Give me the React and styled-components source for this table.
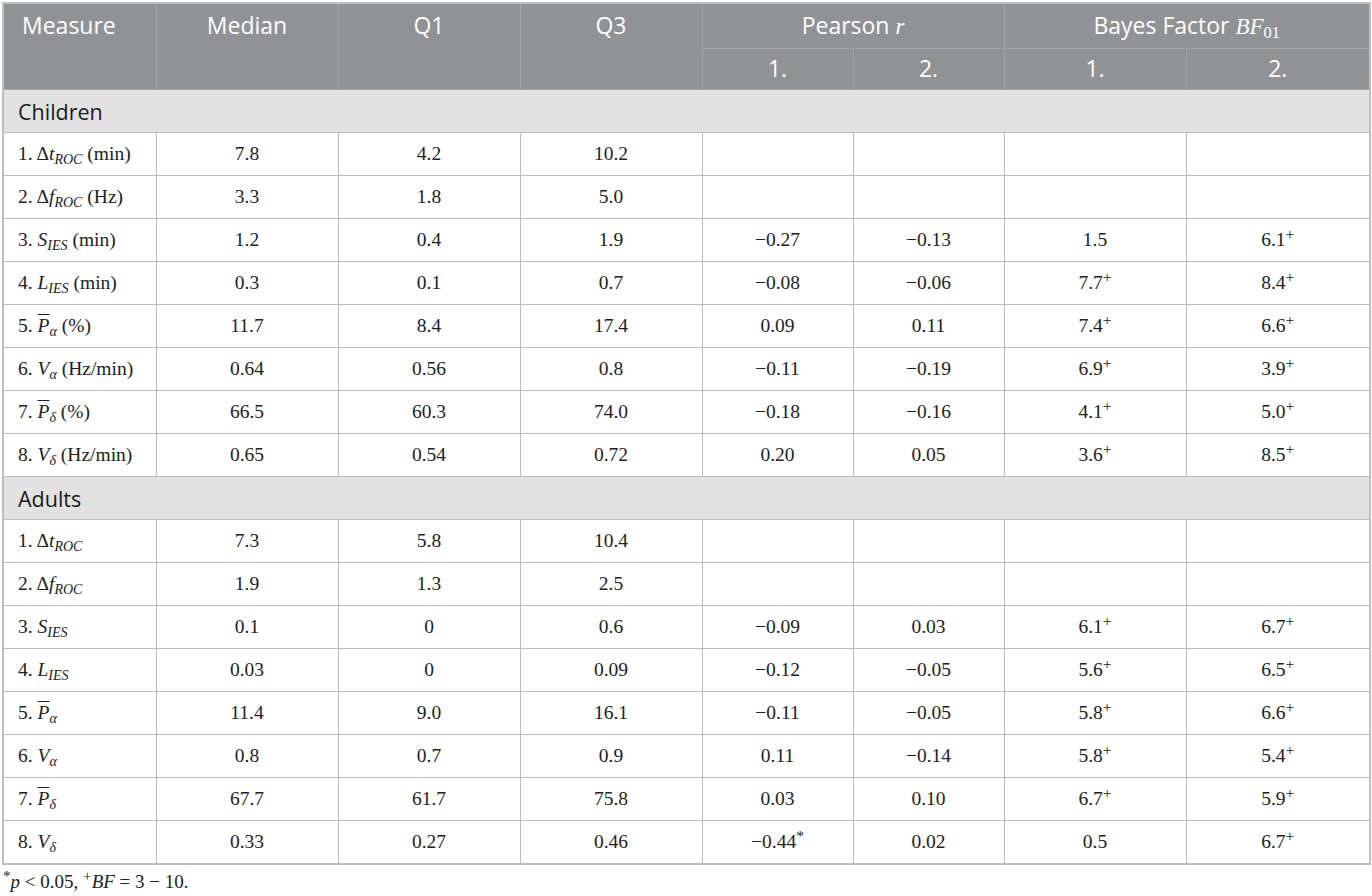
import styled, { createGlobalStyle } from "styled-components";

const GlobalStyle = createGlobalStyle`
  body {
    margin: 0;
    background: #ffffff;
  }
`;

const Page = styled.div`
  padding: 2px 3px 0 2px;
`;

const Table = styled.table`
  width: 1367px;
  border-collapse: collapse;
  table-layout: fixed;
  border: 2px solid #bcc0c0;
`;

const HeadCell = styled.th`
  background: #8f9396;
  color: #ffffff;
  font-family: "Open Sans", "Liberation Sans", sans-serif;
  font-weight: 400;
  font-size: 23px;
  height: ${(p) => p.$h || 41}px;
  padding: 0 ${(p) => (p.$left ? 18 : 14)}px;
  text-align: ${(p) => (p.$left ? "left" : "center")};
  vertical-align: top;
  line-height: ${(p) => p.$lh || 43}px;
  border: 1px solid #a3a6a8;
  box-sizing: border-box;
  white-space: nowrap;
`;

const GroupCell = styled.td`
  background: #e1e2e1;
  color: #1a1a1a;
  font-family: "Open Sans", "Liberation Sans", sans-serif;
  font-size: 21.5px;
  height: 42px;
  padding: 0 14px;
  border: 1px solid #b8bcbc;
`;

const Cell = styled.td`
  font-family: "Liberation Serif", "DejaVu Serif", serif;
  font-size: 19.5px;
  color: #222;
  height: 42px;
  padding: 0 14px;
  text-align: ${(p) => (p.$left ? "left" : "center")};
  border: 1px solid #b8bcbc;
  white-space: nowrap;
`;

const Ital = styled.i`
  font-family: "Liberation Serif", serif;
`;

const Sub = styled.sub`
  font-size: 0.72em;
  vertical-align: -0.25em;
  line-height: 0;
`;

const Sup = styled.sup`
  font-size: 0.8em;
  vertical-align: 0.45em;
  line-height: 0;
`;

const Bar = styled.span`
  font-style: italic;
  text-decoration: overline;
  text-decoration-thickness: 1px;
`;

const Footnote = styled.div`
  font-family: "Liberation Serif", serif;
  font-size: 19px;
  color: #222;
  padding: 6px 0 0 1px;
`;

const Delta = ({ v }) => (
  <>
    Δ<Ital>{v}</Ital>
    <Sub>
      <Ital>ROC</Ital>
    </Sub>
  </>
);

const Ies = ({ v }) => (
  <>
    <Ital>{v}</Ital>
    <Sub>
      <Ital>IES</Ital>
    </Sub>
  </>
);

const Greek = ({ v, g, bar }) => (
  <>
    {bar ? <Bar>{v}</Bar> : <Ital>{v}</Ital>}
    <Sub>
      <Ital>{g}</Ital>
    </Sub>
  </>
);

const plus = (v) => (
  <>
    {v}
    <Sup>+</Sup>
  </>
);

const labels = (units) => [
  <>1. <Delta v="t" />{units ? " (min)" : ""}</>,
  <>2. <Delta v="f" />{units ? " (Hz)" : ""}</>,
  <>3. <Ies v="S" />{units ? " (min)" : ""}</>,
  <>4. <Ies v="L" />{units ? " (min)" : ""}</>,
  <>5. <Greek v="P" g="α" bar />{units ? " (%)" : ""}</>,
  <>6. <Greek v="V" g="α" />{units ? " (Hz/min)" : ""}</>,
  <>7. <Greek v="P" g="δ" bar />{units ? " (%)" : ""}</>,
  <>8. <Greek v="V" g="δ" />{units ? " (Hz/min)" : ""}</>,
];

const children = [
  ["7.8", "4.2", "10.2", "", "", "", ""],
  ["3.3", "1.8", "5.0", "", "", "", ""],
  ["1.2", "0.4", "1.9", "−0.27", "−0.13", "1.5", plus("6.1")],
  ["0.3", "0.1", "0.7", "−0.08", "−0.06", plus("7.7"), plus("8.4")],
  ["11.7", "8.4", "17.4", "0.09", "0.11", plus("7.4"), plus("6.6")],
  ["0.64", "0.56", "0.8", "−0.11", "−0.19", plus("6.9"), plus("3.9")],
  ["66.5", "60.3", "74.0", "−0.18", "−0.16", plus("4.1"), plus("5.0")],
  ["0.65", "0.54", "0.72", "0.20", "0.05", plus("3.6"), plus("8.5")],
];

const adults = [
  ["7.3", "5.8", "10.4", "", "", "", ""],
  ["1.9", "1.3", "2.5", "", "", "", ""],
  ["0.1", "0", "0.6", "−0.09", "0.03", plus("6.1"), plus("6.7")],
  ["0.03", "0", "0.09", "−0.12", "−0.05", plus("5.6"), plus("6.5")],
  ["11.4", "9.0", "16.1", "−0.11", "−0.05", plus("5.8"), plus("6.6")],
  ["0.8", "0.7", "0.9", "0.11", "−0.14", plus("5.8"), plus("5.4")],
  ["67.7", "61.7", "75.8", "0.03", "0.10", plus("6.7"), plus("5.9")],
  [
    "0.33",
    "0.27",
    "0.46",
    <>
      −0.44<Sup>*</Sup>
    </>,
    "0.02",
    "0.5",
    plus("6.7"),
  ],
];

const widths = [153, 182, 182, 182, 151, 151, 182, 184];

const Group = ({ title, rows, units }) => {
  const names = labels(units);
  return (
    <>
      <tr>
        <GroupCell colSpan={8}>{title}</GroupCell>
      </tr>
      {rows.map((r, i) => (
        <tr key={i}>
          <Cell $left>{names[i]}</Cell>
          {r.map((v, j) => (
            <Cell key={j}>{v}</Cell>
          ))}
        </tr>
      ))}
    </>
  );
};

const App = () => {
  return (
    <Page>
      <GlobalStyle />
      <Table>
        <colgroup>
          {widths.map((w, i) => (
            <col key={i} style={{ width: w }} />
          ))}
        </colgroup>
        <thead>
          <tr>
            <HeadCell $left rowSpan={2}>Measure</HeadCell>
            <HeadCell rowSpan={2}>Median</HeadCell>
            <HeadCell rowSpan={2}>Q1</HeadCell>
            <HeadCell rowSpan={2}>Q3</HeadCell>
            <HeadCell colSpan={2} $h={43}>
              Pearson <Ital>r</Ital>
            </HeadCell>
            <HeadCell colSpan={2} $h={43}>
              Bayes Factor <Ital>BF</Ital>
              <Sub style={{ fontFamily: "Liberation Serif, serif" }}>01</Sub>
            </HeadCell>
          </tr>
          <tr>
            <HeadCell $h={41} $lh={39}>1.</HeadCell>
            <HeadCell $h={41} $lh={39}>2.</HeadCell>
            <HeadCell $h={41} $lh={39}>1.</HeadCell>
            <HeadCell $h={41} $lh={39}>2.</HeadCell>
          </tr>
        </thead>
        <tbody>
          <Group title="Children" rows={children} units />
          <Group title="Adults" rows={adults} />
        </tbody>
      </Table>
      <Footnote>
        <Sup>*</Sup>
        <Ital>p</Ital> &lt; 0.05, <Sup>+</Sup>
        <Ital>BF</Ital> = 3 − 10.
      </Footnote>
    </Page>
  );
};

export default App;
